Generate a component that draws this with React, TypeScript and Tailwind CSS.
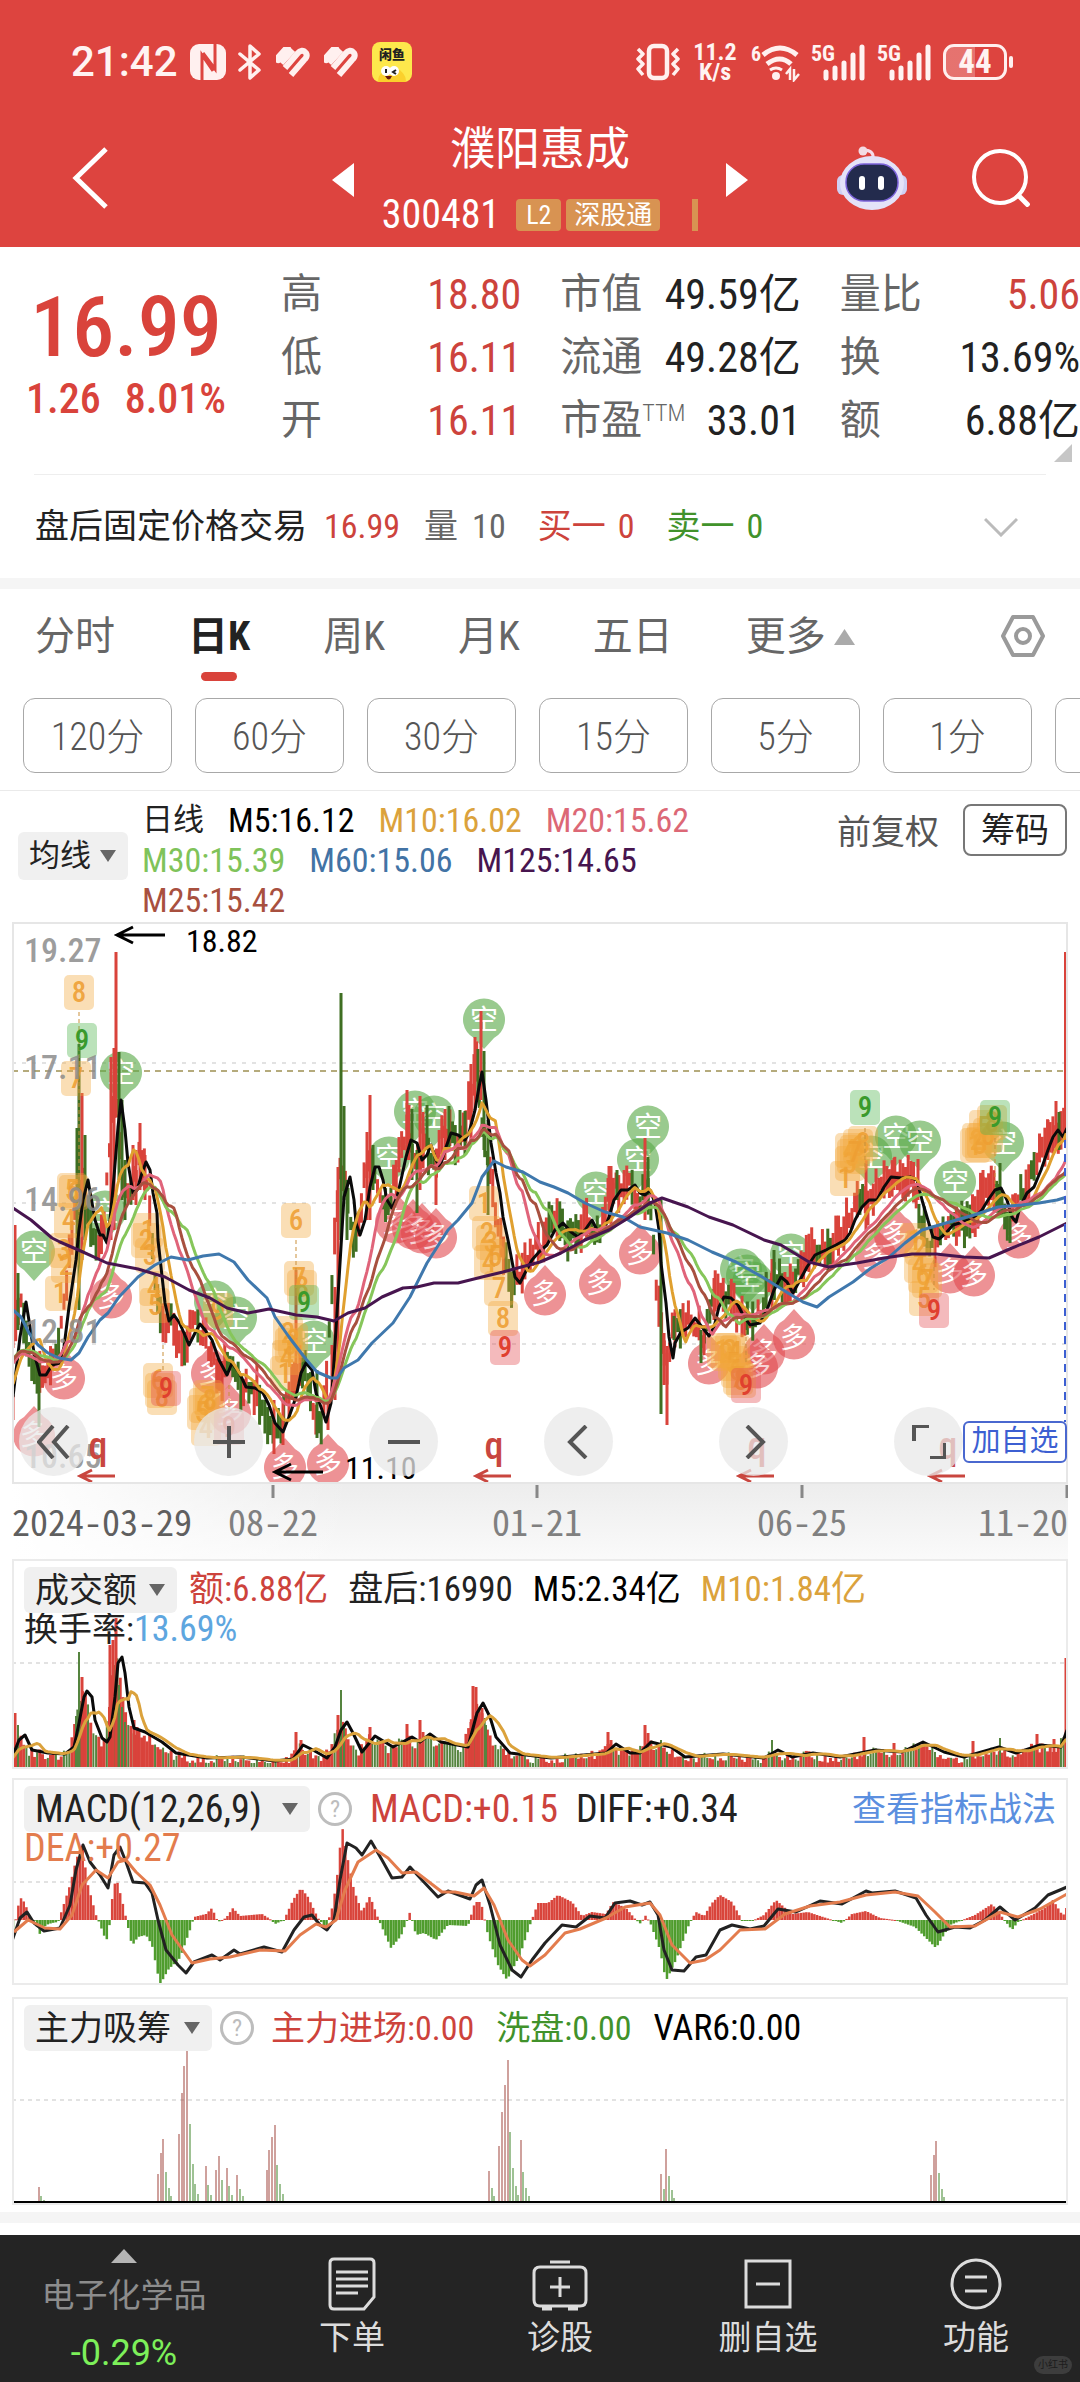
import React from 'react';

type Pt = [number, number];
type Tone = 'r' | 'g';

const RED = '#d9433b';
const GREEN = '#3f6f22';
const LEFT = 12;
const RIGHT = 1068;
const BARS = 394;
const STEP = (RIGHT - LEFT) / BARS;

/* ---------- chart data ---------- */

const ma5: Pt[] = [
  [-80, 1372], [-50, 1350], [-20, 1335], [0, 1372], [13, 1397], [20, 1337], [26, 1302], [30, 1327], [34, 1353], [40, 1375], [46, 1375], [52, 1365], [60, 1363], [64, 1347], [69, 1307], [76, 1260], [79, 1230],
  [83, 1200], [88, 1180], [91, 1197], [95, 1220], [100, 1235], [103, 1235], [107, 1243], [110, 1220], [114, 1177], [118, 1127], [121, 1100], [125, 1130], [128, 1163], [133, 1193], [137, 1190],
  [142, 1173], [146, 1162], [150, 1170], [153, 1193], [157, 1213], [158, 1240], [161, 1267], [165, 1303], [169, 1321], [174, 1315], [179, 1322], [184, 1333], [189, 1345], [195, 1333], [200, 1324],
  [205, 1330], [212, 1340], [219, 1360], [227, 1375], [232, 1363], [239, 1372], [246, 1387], [255, 1388], [263, 1393], [269, 1405], [275, 1423], [283, 1432], [289, 1417], [296, 1397], [301, 1373],
  [306, 1363], [312, 1370], [316, 1393], [322, 1410], [326, 1422], [331, 1403], [333, 1377], [337, 1313], [341, 1247], [344, 1197], [350, 1177], [354, 1200], [356, 1223], [360, 1235], [365, 1220],
  [370, 1187], [375, 1167], [379, 1167], [383, 1180], [387, 1200], [392, 1208], [397, 1197], [401, 1180], [406, 1157], [411, 1140], [417, 1143], [422, 1160], [427, 1155], [431, 1145], [436, 1160],
  [440, 1167], [445, 1150], [451, 1133], [458, 1135], [465, 1140], [469, 1133], [475, 1110], [479, 1087], [482, 1072], [486, 1100], [491, 1143], [496, 1173], [500, 1193], [503, 1217], [508, 1240],
  [515, 1277], [520, 1283], [525, 1273], [532, 1260], [539, 1252], [547, 1245], [555, 1230], [563, 1223], [571, 1232], [578, 1237], [585, 1230], [592, 1220], [597, 1230], [604, 1230], [609, 1217],
  [614, 1200], [621, 1190], [628, 1190], [635, 1185], [640, 1193], [645, 1195], [650, 1190], [655, 1203], [659, 1230], [661, 1263], [666, 1303], [669, 1337], [673, 1358], [675, 1343], [681, 1332],
  [688, 1328], [695, 1318], [702, 1327], [709, 1336], [714, 1327], [719, 1307], [724, 1297], [731, 1298], [738, 1305], [743, 1315], [750, 1325], [760, 1323], [767, 1310], [774, 1290], [781, 1277],
  [787, 1282], [793, 1293], [800, 1280], [807, 1267], [815, 1255], [826, 1250], [836, 1245], [845, 1240], [850, 1233], [855, 1220], [862, 1207], [869, 1200], [877, 1200], [884, 1187], [891, 1177],
  [902, 1178], [910, 1177], [917, 1180], [922, 1200], [927, 1217], [933, 1237], [939, 1239], [946, 1233], [953, 1225], [963, 1222], [974, 1218], [982, 1210], [988, 1200], [995, 1190], [1001, 1188],
  [1007, 1200], [1012, 1217], [1016, 1222], [1020, 1207], [1027, 1193], [1034, 1187], [1041, 1170], [1048, 1150], [1053, 1137], [1058, 1130], [1063, 1137], [1067, 1128],
];

const ma60: Pt[] = [
  [13, 1310], [21, 1317], [29, 1333], [38, 1345], [48, 1353], [59, 1358], [71, 1360], [79, 1353], [88, 1337], [100, 1320], [108, 1313], [119, 1297], [138, 1277], [155, 1265], [171, 1257], [188, 1260],
  [203, 1256], [219, 1254], [234, 1262], [248, 1280], [267, 1298], [275, 1317], [289, 1337], [305, 1358], [317, 1372], [331, 1378], [337, 1378], [344, 1368], [358, 1360], [372, 1343], [393, 1323],
  [410, 1297], [427, 1263], [448, 1230], [458, 1220], [472, 1203], [482, 1177], [494, 1161], [506, 1167], [523, 1172], [540, 1182], [554, 1187], [568, 1193], [585, 1203], [605, 1212], [623, 1217],
  [640, 1227], [667, 1233], [688, 1240], [712, 1252], [736, 1262], [764, 1278], [788, 1293], [803, 1302], [817, 1307], [829, 1297], [853, 1282], [871, 1268], [888, 1258], [905, 1243], [922, 1230],
  [946, 1223], [974, 1215], [998, 1207], [1022, 1205], [1039, 1203], [1057, 1200], [1067, 1197],
];

const ma125: Pt[] = [
  [13, 1208], [31, 1220], [52, 1238], [60, 1242], [83, 1252], [107, 1263], [138, 1269], [165, 1277], [189, 1290], [210, 1298], [227, 1308], [248, 1313], [269, 1309], [296, 1315], [317, 1317],
  [334, 1321], [348, 1313], [365, 1308], [382, 1297], [403, 1288], [417, 1287], [434, 1283], [458, 1283], [482, 1277], [503, 1272], [540, 1262], [561, 1253], [585, 1240], [609, 1230], [630, 1217],
  [650, 1203], [662, 1198], [688, 1207], [709, 1217], [733, 1225], [764, 1240], [781, 1245], [809, 1262], [829, 1267], [857, 1263], [884, 1258], [912, 1254], [936, 1254], [964, 1257], [989, 1258],
  [1012, 1248], [1039, 1237], [1057, 1228], [1067, 1223],
];

const wicks: [number, number, number, Tone][] = [
  [15, 1225, 1310, 'r'], [18, 1273, 1330, 'g'], [13, 1395, 1420, 'r'], [39, 1360, 1427, 'g'], [77, 1128, 1260, 'g'], [79, 1044, 1310, 'g'], [82, 1093, 1260, 'r'], [85, 1135, 1240, 'g'],
  [111, 1057, 1240, 'r'], [114, 1048, 1230, 'r'], [116, 952, 1100, 'r'], [119, 1052, 1180, 'g'], [122, 1100, 1200, 'g'], [125, 1160, 1220, 'g'], [133, 1145, 1200, 'r'], [136, 1150, 1205, 'r'], [140, 1123, 1190, 'r'],
  [145, 1155, 1200, 'r'], [274, 1400, 1454, 'r'], [283, 1400, 1445, 'r'], [296, 1270, 1400, 'r'], [317, 1370, 1438, 'g'], [328, 1400, 1430, 'r'], [332, 1345, 1395, 'r'], [335, 1287, 1400, 'r'], [338, 1167, 1380, 'r'],
  [341, 993, 1240, 'g'], [344, 1106, 1200, 'g'], [347, 1180, 1240, 'g'], [367, 1132, 1220, 'r'], [370, 1095, 1220, 'r'], [373, 1145, 1190, 'g'], [407, 1090, 1160, 'r'], [409, 1105, 1160, 'r'], [412, 1109, 1180, 'g'],
  [417, 1150, 1213, 'g'], [420, 1096, 1190, 'r'], [423, 1112, 1160, 'r'], [427, 1105, 1150, 'g'], [436, 1150, 1205, 'r'], [445, 1109, 1160, 'r'], [449, 1106, 1150, 'g'], [460, 1110, 1150, 'g'], [465, 1111, 1155, 'g'],
  [471, 1064, 1140, 'r'], [475, 1037, 1110, 'r'], [478, 1049, 1100, 'g'], [481, 1011, 1100, 'r'], [484, 1051, 1150, 'g'], [488, 1120, 1215, 'g'], [609, 1166, 1220, 'r'], [611, 1166, 1230, 'r'], [617, 1170, 1200, 'g'],
  [645, 1138, 1220, 'r'], [648, 1157, 1200, 'g'], [661, 1200, 1414, 'g'], [664, 1333, 1385, 'r'], [667, 1346, 1425, 'r'], [674, 1316, 1340, 'g'], [701, 1330, 1363, 'g'], [704, 1325, 1355, 'r'], [714, 1278, 1320, 'r'],
  [772, 1259, 1310, 'r'], [774, 1250, 1300, 'g'], [866, 1160, 1230, 'r'], [894, 1158, 1190, 'r'], [918, 1159, 1200, 'r'], [983, 1170, 1215, 'r'], [1000, 1163, 1210, 'g'], [1048, 1120, 1160, 'r'], [1056, 1101, 1140, 'r'],
  [1059, 1112, 1150, 'g'],
];

const sellPins: Pt[] = [
  [34, 1252], [121, 1073], [105, 1212], [484, 1020], [415, 1112], [434, 1117], [389, 1158], [215, 1302], [236, 1318], [314, 1342], [596, 1193], [638, 1160], [648, 1127], [871, 1157], [896, 1137],
  [920, 1142], [955, 1182], [1003, 1143], [741, 1270], [753, 1283], [747, 1276], [791, 1255],
];

const buyPins: Pt[] = [
  [64, 1378], [34, 1435], [111, 1297], [212, 1373], [230, 1413], [285, 1467], [328, 1463], [396, 1222], [413, 1228], [422, 1232], [436, 1237], [545, 1294], [600, 1283], [640, 1253], [709, 1363],
  [764, 1353], [757, 1367], [794, 1338], [876, 1257], [895, 1235], [950, 1272], [974, 1275], [1019, 1237],
];

const tags: [number, number, string][] = [
  [79, 992, '8'], [76, 1078, '7'], [72, 1190, '5'], [74, 1192, '6'], [69, 1220, '4'], [64, 1250, '3'], [66, 1265, '2'], [60, 1293, '1'],
  [148, 1230, '1'], [146, 1240, '2'], [150, 1255, '3'], [154, 1288, '4'], [155, 1305, '5'], [158, 1380, '6'], [162, 1397, '8'], [160, 1390, '7'],
  [218, 1310, '9'], [208, 1397, '7'], [204, 1405, '6'], [202, 1412, '5'], [210, 1400, '8'], [206, 1428, '4'],
  [296, 1220, '6'], [299, 1278, '7'], [302, 1287, '8'], [288, 1333, '2'], [293, 1340, '8'], [290, 1345, '3'], [287, 1357, '4'], [285, 1373, '1'],
  [484, 1203, '1'], [487, 1233, '2'], [491, 1242, '3'], [489, 1262, '4'], [495, 1256, '5'], [499, 1288, '7'], [503, 1318, '8'],
  [722, 1350, '1'], [726, 1353, '2'], [730, 1350, '3'], [735, 1352, '4'], [733, 1363, '5'], [736, 1370, '6'], [738, 1377, '7'], [741, 1380, '8'],
  [850, 1150, '4'], [852, 1156, '5'], [850, 1163, '3'], [845, 1178, '1'], [858, 1146, '6'], [863, 1143, '8'], [855, 1152, '7'],
  [975, 1145, '1'], [977, 1140, '2'], [980, 1144, '3'], [984, 1127, '5'], [982, 1140, '4'], [988, 1135, '6'], [992, 1122, '8'],
  [915, 1240, '1'], [920, 1247, '2'], [919, 1265, '4'], [923, 1275, '6'], [927, 1280, '7'], [924, 1298, '5'],
];

const nines: [number, number, Tone][] = [
  [82, 1040, 'g'], [304, 1302, 'g'], [865, 1107, 'g'], [995, 1117, 'g'], [166, 1388, 'r'], [229, 1427, 'r'], [505, 1347, 'r'], [746, 1385, 'r'], [934, 1310, 'r'],
];

const volLine: Pt[] = [
  [-20, 1762], [12, 1758], [19, 1740], [25, 1735], [32, 1750], [48, 1753], [65, 1754], [74, 1747], [79, 1723], [84, 1697], [87, 1691], [92, 1697], [95, 1720], [102, 1738], [107, 1742], [110, 1737],
  [115, 1697], [118, 1663], [122, 1657], [125, 1673], [129, 1707], [134, 1728], [145, 1732], [162, 1742], [176, 1753], [207, 1758], [241, 1757], [275, 1761], [293, 1759], [303, 1745], [313, 1750],
  [327, 1758], [335, 1747], [341, 1730], [347, 1722], [353, 1733], [362, 1752], [375, 1736], [393, 1747], [412, 1737], [420, 1742], [430, 1734], [441, 1742], [468, 1747], [477, 1713], [483, 1703],
  [490, 1717], [496, 1737], [510, 1753], [551, 1758], [606, 1753], [616, 1744], [630, 1753], [640, 1753], [651, 1742], [671, 1747], [685, 1757], [723, 1754], [764, 1758], [778, 1750], [792, 1757],
  [813, 1753], [840, 1757], [875, 1750], [902, 1752], [923, 1742], [944, 1752], [964, 1757], [999, 1747], [1016, 1753], [1040, 1745], [1061, 1747], [1067, 1730],
];

const volSpikes: [number, number, Tone][] = [
  [15, 1713, 'r'], [18, 1725, 'g'], [76, 1716, 'g'], [79, 1652, 'g'], [82, 1677, 'r'], [85, 1705, 'r'], [88, 1720, 'g'], [110, 1645, 'r'], [113, 1640, 'r'], [116, 1618, 'r'], [119, 1685, 'g'],
  [122, 1707, 'g'], [125, 1722, 'g'], [134, 1720, 'r'], [137, 1727, 'r'], [296, 1732, 'r'], [301, 1740, 'r'], [338, 1715, 'r'], [341, 1690, 'g'], [344, 1727, 'g'], [370, 1727, 'r'], [407, 1724, 'r'],
  [420, 1720, 'r'], [423, 1732, 'r'], [471, 1722, 'r'], [473, 1686, 'r'], [476, 1687, 'r'], [479, 1712, 'r'], [482, 1708, 'r'], [486, 1725, 'g'], [608, 1732, 'r'], [611, 1740, 'r'], [645, 1725, 'r'],
  [648, 1733, 'r'], [661, 1740, 'g'], [772, 1740, 'g'], [864, 1737, 'r'], [894, 1743, 'r'], [973, 1741, 'r'], [1000, 1738, 'g'], [1037, 1734, 'r'], [1054, 1739, 'r'], [1066, 1658, 'r'],
];

const macdBars: Pt[] = [
  [12, 1934], [16, 1918], [20, 1897], [25, 1903], [30, 1918], [36, 1922], [39, 1935], [46, 1925], [52, 1923], [58, 1922], [62, 1910], [70, 1885], [76, 1860], [82, 1845], [88, 1885], [96, 1915],
  [99, 1922], [105, 1938], [108, 1940], [112, 1900], [116, 1877], [122, 1900], [127, 1922], [132, 1946], [138, 1937], [146, 1935], [152, 1945], [160, 1985], [168, 1970], [180, 1958], [190, 1930],
  [194, 1917], [206, 1914], [212, 1908], [218, 1922], [226, 1918], [233, 1908], [240, 1916], [262, 1914], [270, 1919], [275, 1924], [284, 1920], [293, 1900], [301, 1888], [308, 1897], [318, 1918],
  [326, 1928], [333, 1905], [338, 1870], [342, 1825], [346, 1850], [354, 1890], [362, 1912], [370, 1896], [378, 1918], [384, 1932], [391, 1948], [401, 1936], [410, 1912], [416, 1935], [424, 1933],
  [436, 1940], [448, 1925], [468, 1926], [475, 1902], [481, 1902], [488, 1935], [498, 1965], [507, 1980], [520, 1955], [530, 1925], [538, 1903], [548, 1903], [558, 1895], [572, 1902], [582, 1916],
  [592, 1912], [606, 1914], [613, 1902], [626, 1908], [636, 1920], [641, 1924], [645, 1915], [650, 1922], [660, 1950], [666, 1981], [676, 1960], [690, 1922], [696, 1912], [704, 1916], [712, 1903],
  [720, 1895], [732, 1902], [742, 1920], [752, 1921], [764, 1915], [776, 1900], [792, 1914], [808, 1912], [820, 1916], [842, 1923], [852, 1914], [866, 1911], [880, 1918], [895, 1920], [915, 1927],
  [936, 1948], [950, 1925], [960, 1921], [975, 1915], [992, 1904], [1003, 1918], [1012, 1930], [1018, 1922], [1030, 1916], [1045, 1908], [1053, 1900], [1063, 1916], [1068, 1904],
];

const diff: Pt[] = [
  [12, 1941], [20, 1918], [27, 1912], [34, 1923], [44, 1931], [60, 1928], [70, 1905], [76, 1870], [83, 1845], [90, 1862], [100, 1875], [108, 1888], [114, 1855], [120, 1847], [126, 1862], [133, 1882],
  [145, 1883], [152, 1893], [158, 1920], [166, 1950], [178, 1965], [186, 1973], [194, 1962], [212, 1955], [220, 1960], [234, 1950], [240, 1954], [264, 1947], [282, 1952], [294, 1930], [304, 1917],
  [312, 1915], [320, 1925], [327, 1930], [334, 1920], [340, 1880], [347, 1843], [356, 1848], [362, 1855], [371, 1841], [382, 1860], [392, 1878], [402, 1877], [410, 1867], [422, 1880], [438, 1897],
  [448, 1891], [470, 1899], [476, 1885], [482, 1880], [490, 1905], [500, 1945], [512, 1970], [521, 1977], [532, 1960], [545, 1943], [562, 1925], [576, 1927], [590, 1916], [605, 1918], [615, 1903],
  [630, 1901], [642, 1905], [650, 1902], [658, 1915], [664, 1950], [672, 1970], [684, 1971], [696, 1957], [706, 1955], [720, 1930], [732, 1925], [750, 1929], [764, 1926], [778, 1909], [796, 1912],
  [820, 1901], [842, 1904], [866, 1891], [872, 1893], [895, 1891], [916, 1898], [926, 1915], [938, 1932], [955, 1927], [970, 1928], [985, 1920], [1000, 1907], [1015, 1920], [1035, 1908],
  [1048, 1895], [1060, 1890], [1067, 1887],
];

const dea: Pt[] = [
  [14, 1932], [28, 1920], [45, 1928], [60, 1929], [72, 1915], [82, 1885], [96, 1870], [108, 1878], [118, 1862], [126, 1860], [136, 1872], [150, 1885], [160, 1905], [172, 1935], [192, 1963],
  [210, 1959], [230, 1957], [260, 1950], [285, 1951], [300, 1935], [316, 1924], [326, 1927], [336, 1920], [345, 1890], [358, 1862], [376, 1850], [388, 1858], [402, 1873], [416, 1872], [442, 1892],
  [455, 1892], [474, 1896], [484, 1888], [494, 1905], [508, 1940], [522, 1960], [530, 1966], [545, 1955], [565, 1933], [580, 1929], [606, 1918], [625, 1907], [650, 1903], [660, 1915], [672, 1945],
  [690, 1963], [705, 1960], [720, 1950], [740, 1930], [765, 1929], [785, 1914], [810, 1906], [840, 1902], [866, 1895], [895, 1892], [918, 1896], [935, 1912], [950, 1927], [975, 1926], [1000, 1912],
  [1018, 1917], [1040, 1909], [1067, 1894],
];

const flow: [number, number, Tone][] = [
  [39, 2187, 'r'], [41, 2196, 'g'], [44, 2200, 'g'], [158, 2174, 'r'], [161, 2153, 'r'], [163, 2139, 'r'], [166, 2172, 'g'], [169, 2188, 'g'], [171, 2196, 'g'], [179, 2134, 'r'], [182, 2093, 'r'],
  [184, 2066, 'r'], [187, 2046, 'r'], [190, 2124, 'g'], [193, 2164, 'g'], [195, 2184, 'g'], [198, 2194, 'g'], [206, 2166, 'r'], [208, 2185, 'g'], [211, 2195, 'g'], [216, 2170, 'r'], [219, 2156, 'r'],
  [222, 2180, 'g'], [227, 2168, 'r'], [229, 2186, 'g'], [232, 2195, 'g'], [237, 2175, 'r'], [240, 2189, 'g'], [243, 2196, 'g'], [267, 2170, 'r'], [269, 2150, 'r'], [272, 2137, 'r'], [275, 2125, 'r'],
  [277, 2165, 'g'], [280, 2184, 'g'], [283, 2194, 'g'], [489, 2171, 'r'], [492, 2188, 'g'], [494, 2196, 'g'], [499, 2146, 'r'], [502, 2112, 'r'], [505, 2085, 'r'], [508, 2060, 'r'], [510, 2132, 'g'],
  [513, 2168, 'g'], [516, 2186, 'g'], [518, 2195, 'g'], [521, 2140, 'r'], [523, 2172, 'g'], [526, 2188, 'g'], [529, 2196, 'g'], [661, 2174, 'r'], [664, 2189, 'g'], [666, 2149, 'r'], [669, 2176, 'g'],
  [672, 2190, 'g'], [674, 2198, 'g'], [931, 2175, 'r'], [934, 2155, 'r'], [936, 2141, 'r'], [939, 2173, 'g'], [942, 2189, 'g'], [944, 2197, 'g'],
];

/* ---------- helpers ---------- */

const at = (pts: Pt[], x: number) => {
  if (x <= pts[0][0]) return pts[0][1];
  for (let i = 1; i < pts.length; i++) {
    if (x <= pts[i][0]) {
      const [x0, y0] = pts[i - 1];
      const [x1, y1] = pts[i];
      return y0 + ((y1 - y0) * (x - x0)) / (x1 - x0);
    }
  }
  return pts[pts.length - 1][1];
};

const noise = (i: number) => {
  const v = Math.sin(i * 127.1 + 3.7) * 43758.5453;
  return v - Math.floor(v);
};

const xs = Array.from({ length: BARS }, (_, i) => LEFT + 1 + i * STEP);
const join = (pts: Pt[]) => pts.map(([x, y]) => `${x.toFixed(1)},${y.toFixed(1)}`).join(' ');

/* A longer average is the mean of several five-day averages. */
const average = (src: Pt[], days: number): Pt[] =>
  xs.map((x) => {
    const n = days / 5;
    let sum = 0;
    for (let k = 0; k < n; k++) sum += at(src, x - k * 5 * STEP);
    return [x, sum / n];
  });

function Line({ pts, color, width = 3 }: { pts: Pt[]; color: string; width?: number }) {
  return <polyline points={join(pts)} fill="none" stroke={color} strokeWidth={width} strokeLinejoin="round" />;
}

function Bar({ x, top, bottom, fill, w = 3 }: { x: number; top: number; bottom: number; fill: string; w?: number }) {
  return <rect x={x - w / 2} y={top} width={w} height={Math.max(1, bottom - top)} fill={fill} />;
}

function Grid({ y, dash = '4 6' }: { y: number; dash?: string }) {
  return <line x1={LEFT} x2={RIGHT} y1={y} y2={y} stroke="#e2e2e2" strokeWidth="2" strokeDasharray={dash} />;
}

function Arrow({ x, y, w, color, head }: { x: number; y: number; w: number; color: string; head: number }) {
  return <path d={`M${x + w} ${y}H${x}M${x + head * 2} ${y - head}L${x} ${y}l${head * 2} ${head}`} fill="none" stroke={color} strokeWidth="3" />;
}

/* ---------- charts ---------- */

function PriceChart() {
  return (
    <svg viewBox="12 922 1056 562" className="col-start-1 row-start-1 block h-auto w-full" role="img" aria-label="日K线图">
      <Grid y={1063} />
      <Grid y={1203} />
      <Grid y={1344} />
      <line x1="12" x2="1068" y1="1071" y2="1071" stroke="#b5ab7c" strokeWidth="2" strokeDasharray="6 5" />
      {sellPins.map(([x, y], i) => (
        <g key={i} opacity="0.62">
          <path d={`M${x} ${y + 29}l-10 -11a21 21 0 1 1 20 0z`} fill="#5bab4a" />
          <text x={x} y={y + 10} fontSize="28" textAnchor="middle" fill="#ffffff">空</text>
        </g>
      ))}
      {buyPins.map(([x, y], i) => (
        <g key={i} opacity="0.6">
          <path d={`M${x} ${y - 29}l-10 11a21 21 0 1 0 20 0z`} fill="#e24a4f" />
          <text x={x} y={y + 10} fontSize="28" textAnchor="middle" fill="#ffffff">多</text>
        </g>
      ))}
      {xs.map((x, i) => {
        const mid = at(ma5, x + 5);
        const slope = at(ma5, x + 7) - at(ma5, x);
        const shift = (noise(i) - 0.5) * 18 + slope * 0.25;
        const half = 6 + noise(i + 500) * 15;
        const up = noise(Math.floor(i / 2) + 900) < (slope < 0 ? 0.75 : 0.42);
        return <Bar key={i} x={x} top={mid + shift - half} bottom={mid + shift + half} fill={up ? RED : GREEN} />;
      })}
      {wicks.map(([x, a, b, c], i) => (
        <Bar key={i} x={x} top={a} bottom={b} fill={c === 'r' ? RED : GREEN} />
      ))}
      <Bar x={1066} top={952} bottom={1135} fill={RED} w={4} />
      <g fontSize="29" fontWeight="500" textAnchor="middle">
        {tags.map(([x, y, t], i) => (
          <g key={i}>
            <rect x={x - 15} y={y - 17} width="30" height="35" rx="5" fill="#f2a83c" fillOpacity="0.38" />
            <text x={x} y={y + 10} fill="#ee9f33" fillOpacity="0.9">{t}</text>
          </g>
        ))}
        <path d="M79 1012v230M296 1240v40M865 1128v40M995 1138v60M934 1260v30M746 1330v35M229 1385v25M163 1345v25" stroke="#c98f3a" strokeWidth="1" strokeDasharray="4 3" />
        {nines.map(([x, y, c], i) => (
          <g key={i}>
            <rect x={x - 15} y={y - 17} width="30" height="35" rx="5" fill={c === 'r' ? '#e24a4f' : '#4db34a'} fillOpacity="0.38" />
            <text x={x} y={y + 10} fill={c === 'r' ? '#e0402f' : '#3a9a2c'}>9</text>
          </g>
        ))}
      </g>
      <Line pts={ma5.filter(([x]) => x > 12)} color="#0a0a0a" />
      <Line pts={average(ma5, 10)} color="#e0a02f" />
      <Line pts={average(ma5, 20)} color="#e0647a" />
      <Line pts={average(ma5, 30)} color="#86c65a" />
      <Line pts={average(ma5, 25)} color="#a8503f" />
      <Line pts={ma60} color="#3f78ad" />
      <Line pts={ma125} color="#47154f" />
      <line x1="1066" x2="1066" y1="1140" y2="1422" stroke="#3c5fd2" strokeWidth="4" strokeDasharray="8 6" />
      <g fontSize="34" fontWeight="500" fill="#8c8c8c" fillOpacity="0.85">
        <text x="24" y="962">19.27</text>
        <text x="24" y="1079">17.11</text>
        <text x="24" y="1211">14.96</text>
        <text x="24" y="1343">12.81</text>
        <text x="24" y="1468">10.65</text>
      </g>
      <g fontSize="32" fill="#000000">
        <text x="186" y="952">18.82</text>
        <text x="345" y="1479">11.10</text>
      </g>
      <Arrow x={117} y={935} w={48} color="#000000" head={8} />
      <Arrow x={275} y={1472} w={48} color="#000000" head={8} />
      {[98, 494, 757, 948].map((x) => (
        <g key={x}>
          <text x={x} y="1459" fontSize="38" fontWeight="500" textAnchor="middle" fill="#c9463f">q</text>
          <Arrow x={x - 18} y={1476} w={35} color="#c9463f" head={6} />
        </g>
      ))}
    </svg>
  );
}

function VolumeChart() {
  return (
    <svg viewBox="12 1559 1056 210" className="col-start-1 row-start-1 block h-auto w-full" role="img" aria-label="成交额图">
      <Grid y={1663} dash="4 4" />
      {xs.map((x, i) => {
        const top = at(volLine, x + 5) + (noise(i + 40) - 0.3) * 10;
        const up = noise(i + 900) > 0.4;
        return <Bar key={i} x={x} top={Math.min(top, 1763)} bottom={1769} fill={up ? RED : '#55843f'} w={up ? 3 : 2} />;
      })}
      {volSpikes.map(([x, top, c], i) => (
        <Bar key={i} x={x} top={top} bottom={1769} fill={c === 'r' ? RED : '#55843f'} w={c === 'r' ? 3 : 2} />
      ))}
      <Line pts={volLine.filter(([x]) => x > 11)} color="#0a0a0a" />
      <Line pts={average(volLine, 10)} color="#dba23c" />
    </svg>
  );
}

function MacdChart() {
  return (
    <svg viewBox="12 1778 1056 207" className="col-start-1 row-start-1 block h-auto w-full" role="img" aria-label="MACD图">
      <Grid y={1882} dash="4 4" />
      {xs.map((x, i) => {
        const y = at(macdBars, x);
        return <Bar key={i} x={x} top={Math.min(y, 1920)} bottom={Math.max(y, 1920)} fill={y < 1920 ? '#d9443b' : '#4f9c2d'} w={2.5} />;
      })}
      <Line pts={diff} color="#222222" />
      <Line pts={dea} color="#e37c4d" />
    </svg>
  );
}

function FlowChart() {
  return (
    <svg viewBox="12 1997 1056 208" className="col-start-1 row-start-1 block h-auto w-full" role="img" aria-label="主力吸筹图">
      <Grid y={2100} dash="4 4" />
      {flow.map(([x, top, c], i) => (
        <Bar key={i} x={x} top={top} bottom={2203} fill={c === 'r' ? '#a0453d' : '#3f862b'} w={1} />
      ))}
      <line x1="12" x2="1068" y1="2203" y2="2203" stroke="#000000" strokeWidth="4" />
    </svg>
  );
}

/* ---------- small parts ---------- */

function Tri({ dir, className }: { dir: 'up' | 'down' | 'left' | 'right'; className: string }) {
  const d = { up: 'M10 0L20 20H0z', down: 'M0 0H20L10 20z', left: 'M0 10L20 0V20z', right: 'M20 10L0 0V20z' }[dir];
  return (
    <svg viewBox="0 0 20 20" preserveAspectRatio="none" className={className} aria-hidden="true">
      <path d={d} fill="currentColor" />
    </svg>
  );
}

function Picker({ label, name, className }: { label: string; name: string; className: string }) {
  return (
    <label className={'relative flex shrink-0 items-center rounded-md bg-[#f0f0f0] text-[#222] ' + className}>
      <select aria-label={name} className="h-full w-full appearance-none bg-transparent pl-[11px] outline-none">
        <option>{label}</option>
      </select>
      <Tri dir="down" className="pointer-events-none absolute right-3 h-3 w-4 text-[#666]" />
    </label>
  );
}

function Help() {
  return (
    <button aria-label="指标说明" className="flex size-[34px] shrink-0 items-center justify-center rounded-full border-[3px] border-[#bdbdbd] text-2xl leading-none text-[#bdbdbd]">?</button>
  );
}

function Signal() {
  return (
    <svg viewBox="0 0 55 40" className="h-10 w-[55px]">
      <text x="0" y="19" fontSize="22" fontWeight="700" fill="#fff3f2">5G</text>
      <path d="M15 30v6M24 26v10M33 21v15M42 13v23M51 5v31" stroke="#fff3f2" strokeWidth="5" strokeLinecap="round" />
    </svg>
  );
}

function HeartStripes() {
  return (
    <svg viewBox="0 0 34 30" className="h-[30px] w-[34px]" fill="none" stroke="#fff0ef" strokeWidth="6" strokeLinecap="butt">
      <path d="M2 12L11 2" strokeWidth="8" strokeLinecap="round" />
      <path d="M5 16L17 3" />
      <path d="M9 21L21 7Q26 1 30 6Q32 9 28 13L15 28" strokeLinejoin="round" />
    </svg>
  );
}

function StatusBar() {
  return (
    <div className="flex h-[124px] items-center justify-between pr-[67px] pl-[71px] text-[#fff3f2]">
      <div className="flex items-center gap-3">
        <span className="font-['Roboto',sans-serif] text-[42px] leading-none font-medium">21:42</span>
        <svg viewBox="0 0 36 36" className="size-9">
          <rect width="36" height="36" rx="9" fill="#fff0ef" />
          <path d="M9 35V9Q9 3 14 8L25 25V9M13 13V27Q14 35 21 30L27 27V1" fill="none" stroke="#dd443f" strokeWidth="0" />
          <path d="M12 36V11L23 27M25 0V25L13 9" fill="none" stroke="#dd443f" strokeWidth="3" />
        </svg>
        <svg viewBox="0 0 24 36" className="h-9 w-6" fill="none" stroke="#fff0ef" strokeWidth="3.5" strokeLinejoin="round" strokeLinecap="round">
          <path d="M2 10L21 26L12 34V2L21 10L2 26" />
        </svg>
        <span className="flex gap-3.5 px-0.5">
          <HeartStripes />
          <HeartStripes />
        </span>
        <svg viewBox="0 0 40 40" className="size-10">
          <rect width="40" height="40" rx="8" fill="#fde84c" />
          <path d="M6 40a14 14 0 0 1 28 0z" fill="#fbd02c" />
          <circle cx="14" cy="29" r="5" fill="#fff" />
          <circle cx="22" cy="29" r="5" fill="#fff" />
          <path d="M14 27v4M24 28l-3 2l3 2" stroke="#222" strokeWidth="2" fill="none" />
          <path d="M13 34h7q-3 7-7 0z" fill="#6b1a10" />
          <text x="7" y="17" fontSize="13" fontWeight="900" fill="#222">闲鱼</text>
        </svg>
      </div>
      <div className="flex items-center gap-[11px]">
        <svg viewBox="0 0 44 38" className="h-[38px] w-11" fill="none" stroke="#fff0ef" strokeLinejoin="round">
          <rect x="13" y="3" width="18" height="32" rx="5" strokeWidth="4.5" />
          <path d="M2 6l5 5l-5 5l5 5l-5 5l5 6M42 6l-5 5l5 5l-5 5l5 5l-5 6" strokeWidth="3.5" />
        </svg>
        <div className="w-12 text-center text-2xl leading-5 font-bold">
          <div>11.2</div>
          <div>K/s</div>
        </div>
        <svg viewBox="0 0 50 40" className="h-10 w-[50px]">
          <text x="1" y="19" fontSize="20" fontWeight="700" fill="#fff3f2">6</text>
          <path d="M13 13q17-14 34 0M17 22q13-10 24 0" fill="none" stroke="#fff0ef" strokeWidth="5" />
          <path d="M20 28q6-4 12 0" fill="none" stroke="#fff0ef" strokeWidth="3" />
          <circle cx="26" cy="34" r="4" fill="#fff0ef" />
          <path d="M40 38V27l-4 5M44 27v11l5-6" fill="none" stroke="#fff0ef" strokeWidth="2.5" />
        </svg>
        <Signal />
        <Signal />
        <div className="flex items-center gap-0.5">
          <div className="h-9 w-16 rounded-[11px] border-[3px] border-[#fff0ef] bg-linear-to-r from-white/25 from-50% to-transparent to-50% text-center text-[33px] leading-[30px] font-bold">44</div>
          <div className="h-3 w-1 rounded-full bg-[#fff0ef]" />
        </div>
      </div>
    </div>
  );
}

function TitleBar() {
  return (
    <div className="grid h-[123px] grid-cols-[1fr_417px_1fr] text-white">
      <div className="flex items-center pb-[15px] pl-[72px]">
        <button aria-label="返回">
          <svg viewBox="0 0 36 62" className="h-[62px] w-9" fill="none" stroke="#fff" strokeWidth="5">
            <path d="M34 2L4 31L34 60" />
          </svg>
        </button>
      </div>
      <div className="flex justify-between">
        <button aria-label="上一只" className="flex items-center pb-3"><Tri dir="left" className="h-[34px] w-[22px]" /></button>
        <div className="flex flex-col items-center">
          <h1 className="text-[45px] leading-[52px]">濮阳惠成</h1>
          <div className="flex flex-1 items-center pt-1.5 text-[40px] leading-none">
            <span>300481</span>
            <span className="ml-4 rounded-sm bg-[#d89352] px-2.5 text-[26px] leading-8">L2</span>
            <span className="ml-[5px] rounded-sm bg-[#d89352] px-2 text-[26px] leading-8">深股通</span>
            <span className="ml-8 h-8 w-1.5 bg-[#d89352]" />
          </div>
        </div>
        <button aria-label="下一只" className="flex items-center pb-3"><Tri dir="right" className="h-[34px] w-[22px]" /></button>
      </div>
      <div className="flex items-center justify-end gap-[65px] pr-[50px] pb-[15px]">
        <button aria-label="智能助手">
          <svg viewBox="0 0 70 64" className="h-16 w-[70px]">
            <path d="M36 12q1-8-10-8" fill="none" stroke="#f6dcea" strokeWidth="3" />
            <circle cx="26" cy="5" r="4.5" fill="#f3dbe4" />
            <rect x="0" y="29" width="12" height="20" rx="6" fill="#cfd0f4" />
            <rect x="58" y="29" width="12" height="20" rx="6" fill="#cfd0f4" />
            <ellipse cx="35" cy="37" rx="32" ry="27" fill="#e4e2f8" />
            <rect x="9" y="18" width="52" height="37" rx="18" fill="#232b4d" stroke="#7c63d9" strokeWidth="1.5" />
            <rect x="22" y="30" width="6" height="14" rx="3" fill="#fff" />
            <rect x="41" y="30" width="6" height="14" rx="3" fill="#fff" />
          </svg>
        </button>
        <button aria-label="搜索">
          <svg viewBox="0 0 58 58" className="size-[58px]" fill="none" stroke="#fff" strokeWidth="4">
            <circle cx="28" cy="28" r="26" />
            <path d="M45 45L57 57" strokeWidth="5" />
          </svg>
        </button>
      </div>
    </div>
  );
}

function Stat({ label, value, red, sup }: { label: string; value: string; red?: boolean; sup?: string }) {
  return (
    <div className="flex items-center justify-between leading-[63px] whitespace-nowrap">
      <dt className="flex text-[41px] text-[#666]">
        {label}
        {sup && <span className="text-[24px] leading-[48px] font-light">{sup}</span>}
      </dt>
      <dd className={red ? 'text-[#cd433c]' : 'text-[#222]'}>{value}</dd>
    </div>
  );
}

function Quote() {
  return (
    <section className="relative grid grid-cols-[242px_1fr_1fr_1fr] gap-x-[39px] text-[42px]">
      <div className="pt-[37px] pl-2.5 text-center font-medium whitespace-nowrap text-[#d9433b]">
        <div className="text-[84px] leading-[88px]">16.99</div>
        <div className="flex justify-center gap-6 leading-[54px]"><span>1.26</span><span>8.01%</span></div>
      </div>
      <dl className="pt-4 pb-[22px]">
        <Stat label="高" value="18.80" red />
        <Stat label="低" value="16.11" red />
        <Stat label="开" value="16.11" red />
      </dl>
      <dl className="pt-4">
        <Stat label="市值" value="49.59亿" />
        <Stat label="流通" value="49.28亿" />
        <Stat label="市盈" sup="TTM" value="33.01" />
      </dl>
      <dl className="pt-4">
        <Stat label="量比" value="5.06" red />
        <Stat label="换" value="13.69%" />
        <Stat label="额" value="6.88亿" />
      </dl>
      <svg viewBox="0 0 18 18" className="absolute right-2 bottom-3 size-[18px]"><path d="M18 0V18H0z" fill="#c6c6c6" /></svg>
    </section>
  );
}

const tabs = ['分时', '日K', '周K', '月K', '五日'];
const periods = ['120分', '60分', '30分', '15分', '5分', '1分'];

function Tabs() {
  return (
    <nav className="flex h-[94px] items-center justify-between pr-[34px] pl-[35px] text-[40px] text-[#666]">
      <div className="flex h-full gap-[73px]">
        {tabs.map((t) => (
          <button key={t} className={t === '日K' ? 'relative pt-0.5 font-bold text-[#222]' : 'pt-0.5'}>
            {t}
            {t === '日K' && <span className="absolute bottom-0.5 left-1/2 h-[9px] w-9 -translate-x-1/2 rounded-full bg-[#d9433b]" />}
          </button>
        ))}
        <button className="flex items-center gap-2 pt-0.5">更多<Tri dir="up" className="h-4 w-[21px] text-[#aaa]" /></button>
      </div>
      <button aria-label="设置">
        <svg viewBox="0 0 46 44" className="h-11 w-[46px]" fill="none" stroke="#9a9a9a" strokeWidth="4" strokeLinejoin="round">
          <path d="M13 3H33L43 22L33 41H13L3 22z" />
          <circle cx="23" cy="22" r="7" />
        </svg>
      </button>
    </nav>
  );
}

function CircleButton({ label, children }: { label: string; children: React.ReactNode }) {
  return (
    <button aria-label={label} className="flex size-[69px] items-center justify-center rounded-full bg-[#e8e8e8]/75">
      <svg viewBox="0 0 34 34" className="size-[34px]" fill="none" stroke="#555" strokeWidth="4">{children}</svg>
    </button>
  );
}

function NavItem({ label, children }: { label: string; children: React.ReactNode }) {
  return (
    <button className="flex flex-1 flex-col items-center pt-[22px] text-[33px] leading-[54px] text-[#dcdcdc]">
      <svg viewBox="0 0 56 54" className="h-[54px] w-14" fill="none" stroke="#dcdcdc" strokeWidth="3">{children}</svg>
      <span>{label}</span>
    </button>
  );
}

export default function App() {
  return (
    <div className="w-full overflow-hidden bg-white font-['Roboto_Condensed','Noto_Sans_CJK_SC',sans-serif] text-[34px] text-[#222]">
      <header className="bg-[#dd443f]">
        <StatusBar />
        <TitleBar />
      </header>

      <Quote />
      <div className="mx-[34px] h-px bg-[#eee]" />

      <section className="flex h-[103px] items-center pr-[62px] pl-[35px] whitespace-nowrap">
        <span>盘后固定价格交易</span>
        <span className="ml-[17px] text-[#cd433c]">16.99</span>
        <span className="ml-6 text-[#666]">量</span>
        <span className="ml-3.5 text-[#666]">10</span>
        <span className="ml-8 text-[#cd433c]">买一</span>
        <span className="ml-3 text-[#cd433c]">0</span>
        <span className="ml-8 text-[#41922b]">卖一</span>
        <span className="ml-3 text-[#41922b]">0</span>
        <button aria-label="展开" className="ml-auto">
          <svg viewBox="0 0 34 20" className="h-5 w-[34px]" fill="none" stroke="#bbb" strokeWidth="3"><path d="M1 2L17 18L33 2" /></svg>
        </button>
      </section>

      <div className="h-[11px] bg-[#f5f5f5]" />

      <Tabs />

      <div className="mt-[15px] flex gap-[23px] overflow-hidden pl-[23px] text-[38px] font-light text-[#555]">
        {periods.map((p) => (
          <button key={p} className="h-[75px] w-[149px] shrink-0 rounded-xl border border-[#a8a8a8] pt-1">{p}</button>
        ))}
        <button aria-label="更多周期" className="h-[75px] w-[149px] shrink-0 rounded-xl border border-[#a8a8a8]" />
      </div>

      <div className="mt-[17px] flex items-start border-t border-[#eaeaea] pt-[9px] pr-[13px] pb-0.5 pl-[18px]">
        <Picker name="主图指标" label="均线" className="mt-8 h-12 w-[110px] text-[31px]" />
        <div className="ml-3.5 flex max-w-[560px] flex-1 flex-wrap gap-x-6 leading-10 whitespace-nowrap">
          <span className="text-[31px]">日线</span>
          <span className="text-black">M5:16.12</span>
          <span className="text-[#dba23c]">M10:16.02</span>
          <span className="text-[#dc6876]">M20:15.62</span>
          <span className="text-[#7fc35a]">M30:15.39</span>
          <span className="text-[#4273a5]">M60:15.06</span>
          <span className="w-40 text-[#47154f]">M125:14.65</span>
          <span className="text-[#a8503f]">M25:15.42</span>
        </div>
        <button className="mt-2 ml-auto leading-[48px] text-[#555]">前复权</button>
        <button className="mt-1 ml-6 h-[52px] w-[104px] rounded-lg border-2 border-[#777] leading-none">筹码</button>
      </div>

      <main className="px-3">
        <section className="relative grid outline-2 -outline-offset-2 outline-[#e6e6e6]">
          <PriceChart />
          <div className="z-10 col-start-1 row-start-1 flex items-center self-end pr-px pb-2 pl-[7px]">
            <div className="flex flex-1 justify-between">
              <CircleButton label="最早"><path d="M16 1L2 17L16 33M31 1L17 17L31 33" /></CircleButton>
              <CircleButton label="放大"><path d="M1 17H33M17 1V33" /></CircleButton>
              <CircleButton label="缩小"><path d="M1 17H33" /></CircleButton>
              <CircleButton label="向左"><path d="M24 1L8 17L24 33" /></CircleButton>
              <CircleButton label="向右"><path d="M10 1L26 17L10 33" /></CircleButton>
              <CircleButton label="全屏"><path d="M2 16V1H17M33 18V33H18" /></CircleButton>
            </div>
            <button className="h-[42px] w-[104px] rounded-md border-2 border-[#4a68cf] bg-white text-[29px] leading-none text-[#3c5fd2]">加自选</button>
          </div>
        </section>

        <svg viewBox="12 1484 1056 75" className="block h-auto w-full bg-linear-to-b from-[#ededed] to-[#fafafa]" role="img" aria-label="日期轴">
          <defs>
            <linearGradient id="fade" x1="0" x2="1" y1="0" y2="0">
              <stop offset="0" stopColor="#fff" />
              <stop offset="1" stopColor="#fff" stopOpacity="0" />
            </linearGradient>
          </defs>
          <rect x="12" y="1484" width="340" height="75" fill="url(#fade)" />
          <path d="M273 1485v13M537 1485v13M802 1485v13M1067 1485v13" stroke="#888" strokeWidth="3" />
          <g fontSize="36" fontFamily="'Noto Sans Mono CJK SC', monospace" fontWeight="500" fill="#808080" textAnchor="middle">
            <text x="12" y="1536" textAnchor="start" fill="#5f5f5f">2024-03-29</text>
            <text x="273" y="1536">08-22</text>
            <text x="537" y="1536">01-21</text>
            <text x="802" y="1536">06-25</text>
            <text x="1068" y="1536" textAnchor="end">11-20</text>
          </g>
        </svg>

        <section className="mb-[9px] grid outline-2 -outline-offset-2 outline-[#ebebeb]">
          <VolumeChart />
          <div className="z-10 col-start-1 row-start-1 px-3 pt-2 whitespace-nowrap">
            <div className="flex items-center text-[35px] leading-[46px]">
              <Picker name="副图一指标" label="成交额" className="h-[46px] w-[153px] text-[34px]" />
              <span className="ml-3 text-[#cd433c]">额:6.88亿</span>
              <span className="ml-5">盘后:16990</span>
              <span className="ml-5 text-black">M5:2.34亿</span>
              <span className="ml-5 text-[#dba23c]">M10:1.84亿</span>
            </div>
            <div className="leading-8">换手率:<span className="text-[36px] text-[#5ea6df]">13.69%</span></div>
          </div>
        </section>

        <section className="mb-3 grid outline-2 -outline-offset-2 outline-[#ebebeb]">
          <MacdChart />
          <div className="z-10 col-start-1 row-start-1 px-3 pt-2 whitespace-nowrap">
            <div className="flex items-center text-[38px] leading-[46px]">
              <Picker name="副图二指标" label="MACD(12,26,9)" className="mr-2 h-[46px] w-[286px]" />
              <Help />
              <span className="ml-[18px] text-[#cd433c]">MACD:+0.15</span>
              <span className="ml-[18px]">DIFF:+0.34</span>
              <a href="#tactics" className="ml-auto text-[34px] text-[#5b8fdf]">查看指标战法</a>
            </div>
            <div className="text-[38px] leading-8 text-[#e37c4d]">DEA:+0.27</div>
          </div>
        </section>

        <section className="mb-[7px] grid outline-2 -outline-offset-2 outline-[#ebebeb]">
          <FlowChart />
          <div className="z-10 col-start-1 row-start-1 flex items-center self-start px-3 pt-2 leading-[46px] whitespace-nowrap">
            <Picker name="副图三指标" label="主力吸筹" className="mr-2 h-[46px] w-[188px]" />
            <Help />
            <span className="ml-[17px] text-[#cd433c]">主力进场:0.00</span>
            <span className="ml-[22px] text-[#41922b]">洗盘:0.00</span>
            <span className="ml-[22px] text-[36px] text-black">VAR6:0.00</span>
          </div>
        </section>
      </main>

      <div className="mb-3 h-[11px] bg-[#f5f5f5]" />

      <footer className="relative flex h-[147px] bg-[#242424]">
        <button className="flex w-[248px] flex-col items-center pt-3.5">
          <Tri dir="up" className="h-3.5 w-[26px] text-[#b5b5b5]" />
          <span className="mt-2 text-[33px] leading-[50px] text-[#8c8c8c]">电子化学品</span>
          <span className="mt-1 font-['Roboto',sans-serif] text-4xl leading-[56px] text-[#7df05a]">-0.29%</span>
        </button>
        <NavItem label="下单">
          <path d="M10 2H46Q50 2 50 6V40L40 52H10Q6 52 6 48V6Q6 2 10 2zM12 15H44M12 22H44M12 29H44M12 36H34" />
        </NavItem>
        <NavItem label="诊股">
          <path d="M18 5H38M8 10H48Q54 10 54 16V43Q54 49 48 49H8Q2 49 2 43V16Q2 10 8 10zM28 20V40M18 30H38M10 52H20M36 52H46" />
        </NavItem>
        <NavItem label="删自选">
          <path d="M6 4H50V50H6zM16 27H40" />
        </NavItem>
        <NavItem label="功能">
          <circle cx="28" cy="27" r="24" />
          <path d="M17 20H39M17 34H39" />
        </NavItem>
        <span className="absolute right-2 bottom-2 rounded-full bg-[#3d3d3d] px-1 text-[10px] leading-[18px] text-[#1c1c1c]">小红书</span>
      </footer>
    </div>
  );
}
